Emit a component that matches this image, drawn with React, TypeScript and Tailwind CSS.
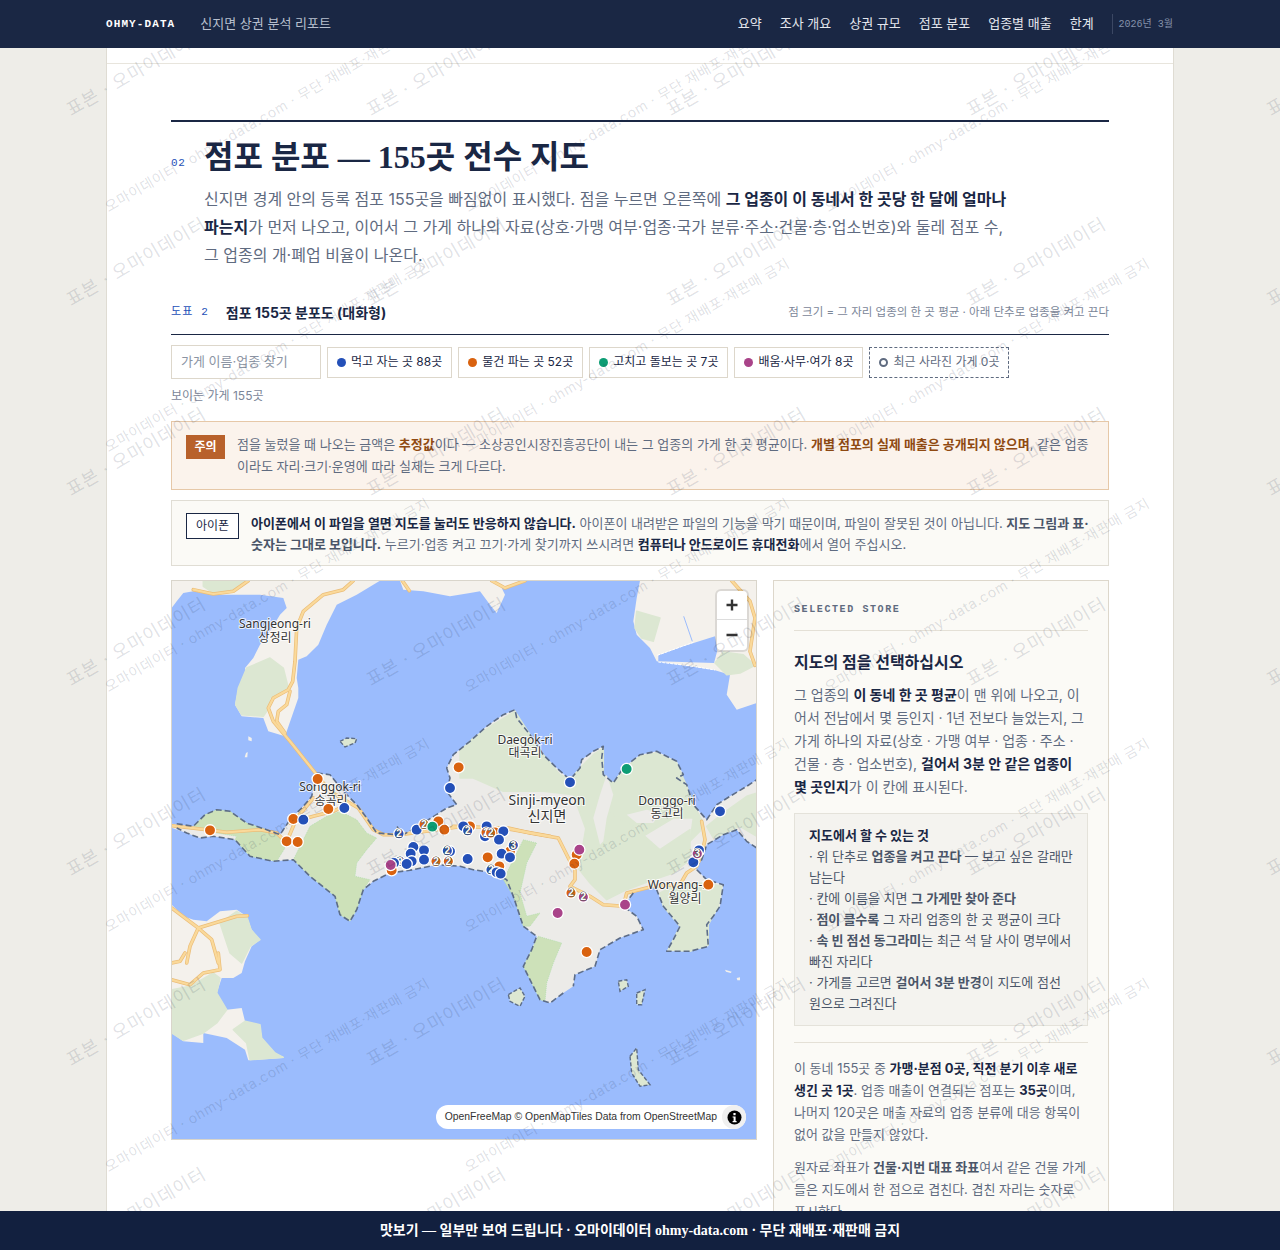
const SANS = "font-['Inter','Noto_Sans_CJK_KR',sans-serif]"
const navy = "#1a2744"

// zoom crops are 3x, so the map was traced in crop coordinates and moved back to page coordinates here
function pts(...segs: [number, number, string][]) {
  return segs
    .map(([ox, oy, s]) =>
      s
        .trim()
        .split(/\s+/)
        .map(p => {
          const [x, y] = p.split(",").map(Number)
          return `${(ox + x / 3).toFixed(1)},${(oy + y / 3).toFixed(1)}`
        })
        .join(" ")
    )
    .join(" ")
}

const Z5: [number, number] = [170, 575]
const Z6: [number, number] = [460, 575]
const Z7: [number, number] = [170, 780]
const Z8: [number, number] = [460, 780]
const Z9: [number, number] = [170, 950]

const mainLand = pts(
  [...Z7, "5,122 70,130 105,95 140,80 180,85 230,120 290,140 330,155 360,110 400,70 425,40"],
  [...Z5, "440,585 480,590 520,640 560,680 590,720 620,765 680,770 680,745 700,770 760,735 830,690 860,680 830,640 840,600 830,570 850,530 900,490"],
  [...Z6, "30,490 80,445 130,410 165,395 170,420 210,470 250,530 290,570 330,605 360,570 365,545 400,520 430,505 425,540 430,590 460,615 490,570 540,530 590,520 650,550 670,590 650,600 680,620 700,680 740,725 770,680 810,655 860,625 890,605"],
  [...Z8, "890,195 860,175 830,140 790,155 740,185 725,230 705,255 740,290 790,305 780,370 760,400 740,425 745,490 690,505 620,505 640,470 660,430 610,370 590,320 590,310 520,330 490,370 530,400 550,440 480,465 420,500 405,550 345,575 340,610 310,630 270,660 240,650 190,550 215,500 230,460 190,430 160,340 140,290 100,270 40,260 0,250"],
  [...Z7, "800,245 730,260 660,270 610,295 580,320 560,380 540,415 510,395 495,340 420,280 370,230 310,235 240,220 195,170 130,160 90,165 50,150 5,135"]
)

const coast = pts(
  [...Z7, "20,122 70,130 105,95 140,80 180,85 230,120 290,140 330,155 360,110 400,70 425,40"],
  [...Z5, "440,585 480,590 520,640 560,680 590,720 620,765 680,770 680,745 700,770 760,735 830,690 860,680 830,640 840,600 830,570 850,530 900,490"],
  [...Z6, "30,490 80,445 130,410 165,395 170,420 210,470 250,530 290,570 330,605 360,570 365,545 400,520 430,505 425,540 430,590 460,615 490,570 540,530 590,520 650,550 670,590 650,600 680,620 700,680 740,725 770,680 810,655 860,625 890,605"]
)
const coastSouth = pts(
  [...Z8, "890,195 860,175 830,140 790,155 740,185 725,230 705,255 740,290 790,305 780,370 760,400 740,425 745,490 690,505 620,505 640,470 660,430 610,370 590,320"],
)
const coastSouth2 = pts(
  [...Z8, "520,330 490,370 530,400 550,440 480,465 420,500 405,550 345,575 340,610"],
)
const coastSouth3 = pts(
  [...Z8, "310,630 270,660 240,650 190,550 215,500 230,460 190,430 160,340 140,290 100,270 40,260 0,250"],
  [...Z7, "800,245 730,260 660,270 610,295 580,320 560,380 540,415 510,395 495,340 420,280 370,230 310,235 240,220 195,170 130,160 90,165 50,150 20,135"]
)

const lands = [
  pts([...Z5, "5,8 5,90 20,70 40,45 70,40 130,50 200,50 270,50 340,60 350,90 330,110 300,160 270,200 250,240 225,270 230,300 205,330 195,380 215,415 280,420 295,460 330,470 345,475 385,360 385,330 380,300 385,245 410,235 445,200 470,140 500,80 560,50 630,8"]),
  pts([...Z5, "690,8 700,35 760,40 840,55 900,45"], [...Z6, "60,40 90,80 110,105 135,50 125,30 200,8"]),
  pts([...Z6, "540,8 530,60 520,130 530,170 570,210 590,250 760,275 810,290 800,350 830,395 890,375 890,8"]),
  pts([...Z7, "5,365 40,400 70,410 110,415 150,385 200,380 230,400 245,440 270,470 245,490 225,535"], [...Z9, "215,60 190,75 155,75 140,120 170,170 215,165 225,205 270,215 275,255 315,300 340,315 235,322 225,290 170,255 100,240 100,270 40,265 5,240"]),
  pts([...Z5, "235,475 245,480 245,490 235,487"]),
  pts([...Z5, "228,525 233,522 232,538 224,538"]),
  pts([...Z8, "795,560 815,566 812,570 798,566"]),
  pts([...Z8, "830,585 840,583 840,592 832,592"]),
]

const islands = [
  pts([...Z5, "510,490 530,480 560,482 555,495 525,507"]),
  pts([...Z8, "145,635 180,615 195,640 180,670 150,655"]),
  pts([...Z8, "475,595 500,590 505,610 480,625"]),
  pts([...Z8, "530,630 555,620 545,665 530,665"]),
  pts([...Z8, "510,820 530,795 535,860 570,905 540,910 515,870"]),
]

const paleGreen = [
  pts([...Z6, "0,520 40,480 100,440 165,400 210,470 250,530 300,590 330,605 360,570 400,530 430,510 430,590 460,615 490,575 540,535 590,525 650,555 680,625 700,680 725,725 720,760 690,790 700,720 640,720 540,780 420,800 380,760 340,650 250,640 130,640 40,600 0,600"]),
  pts([...Z8, "380,120 450,90 520,130 600,200 690,140 690,230 640,270 580,290 500,320 440,350 390,300 350,250 370,180"]),
  pts([...Z8, "740,130 790,90 860,40 890,30 890,160 840,130 760,165"]),
  pts([...Z8, "600,330 660,300 740,300 785,310 775,370 745,425 745,485 690,505 625,500 660,430 610,370"]),
  pts([...Z6, "530,100 600,120 580,190 545,180 525,150"]),
  pts([...Z6, "765,255 790,222 850,230 885,262 840,285 800,290"]),
  pts([...Z5, "230,270 300,240 340,270 355,330 300,360 290,400 280,415 215,410 197,380 205,330"]),
  pts([...Z5, "100,8 230,8 195,32 130,45 100,25"]),
  pts([...Z9, "5,110 60,100 130,60 150,75 140,120 170,170 140,210 100,240 40,262 5,240"]),
  pts([...Z7, "150,420 200,385 232,405 243,440 270,470 240,490 215,540 180,510"]),
  pts([...Z9, "225,205 270,215 275,255 315,300 340,313 240,320 230,270 190,230"]),
]

const parks = [
  pts([...Z7, "370,230 420,130 470,100 510,85 560,110 590,150 620,165 590,200 560,240 555,280 600,290 580,320 560,380 540,415 510,395 495,340 420,280"]),
  pts([...Z8, "190,170 230,180 200,240 180,330 200,400 240,390 210,430 190,430 160,340 130,290"]),
  pts([...Z8, "235,460 305,480 280,540 260,600 255,655 240,650 190,550 215,500"]),
  pts([...Z7, "70,130 105,95 140,80 180,85 230,120 290,140 330,155 345,195 320,235 240,220 195,170 200,160 140,150"]),
]

const towns = [
  pts([...Z7, "255,185 285,180 290,205 265,215"]),
  pts([...Z6, "440,590 460,650 440,720 430,790 420,800 400,720 420,650"]),
  pts([...Z8, "500,95 560,80 600,90 580,120 530,120"]),
]

const roads = [
  pts([...Z7, "5,128 110,140 170,148 270,140 320,150 345,175"]),
  pts([...Z5, "440,590 480,640 565,690 610,755 640,770 690,770 880,745"]),
  pts([...Z7, "850,130 1000,135 1140,160"]),
  pts([...Z5, "430,660 380,720 355,780"]),
  pts([...Z5, "360,735 430,715 490,700 530,680"]),
  pts([...Z8, "145,135 210,150 295,165 330,235 345,250 345,290 330,310 390,340 430,365 490,370 500,330 580,310 660,305 680,270 710,250 725,215 735,170 725,115"]),
  pts([...Z5, "70,35 130,48 190,40 235,8"]),
  pts([...Z5, "550,8 520,35 460,50 400,100 380,150 375,250 368,310 355,335 310,360 295,390 310,430 360,490 440,590"]),
  pts([...Z5, "360,340 350,380 325,400 320,430 345,465"]),
  pts([...Z5, "697,8 718,38"]),
  pts([...Z6, "95,8 135,30 195,8"]),
  pts([...Z6, "815,8 870,70 885,120 870,220 885,262"]),
  pts([...Z7, "5,375 85,435 200,400 232,398"]),
  pts([...Z7, "85,435 60,490 50,540"]),
  pts([...Z7, "85,435 125,470 145,540"]),
  pts([...Z9, "145,0 150,50 100,60 60,95 5,80"]),
  pts([...Z9, "5,30 30,25 45,0"]),
]

type Pin = [number, number, string, string?]
const B = "#2450b8"
const O = "#d9620f"
const G = "#0d9d74"
const P = "#a94389"

function toPage(o: [number, number], list: [number, number, string, string?][]): Pin[] {
  return list.map(([x, y, c, n]) => [o[0] + x / 3, o[1] + y / 3, c, n])
}

const pins: Pin[] = [
  ...toPage(Z5, [
    [443, 603, O], [120, 757, O], [350, 790, O], [383, 792, O], [370, 723, O], [475, 693, O], [866, 568, O],
    [400, 725, B], [523, 690, B], [840, 630, B],
  ]),
  ...toPage(Z7, [
    [687, 152, B, "2"], [740, 140, B], [805, 115, O], [823, 140, O], [762, 124, O, "2"], [787, 131, G],
    [900, 130, O], [880, 130, B], [893, 143, B, "2"],
    [950, 130, B], [945, 160, B], [975, 148, O], [948, 148, O, "2"], [962, 150, O, "2"], [1000, 145, B], [987, 170, B],
    [1020, 205, O], [1030, 187, B, "3"], [995, 212, B], [1020, 223, B],
    [730, 192, B], [722, 212, B], [762, 202, B], [840, 205, B], [832, 203, B, "2"],
    [725, 235, B], [690, 235, B, "2"], [672, 240, B], [665, 262, O], [662, 246, P], [710, 243, B], [762, 230, B],
    [798, 235, O, "2"], [835, 235, O, "2"], [893, 228, B], [953, 223, O], [988, 250, O], [963, 260, B, "2"], [980, 268, B], [992, 272, B],
  ]),
  ...toPage(Z8, [
    [780, 85, B], [350, 215, O], [358, 200, P], [343, 242, O], [333, 330, O, "2"], [370, 342, P, "2"], [495, 365, P], [293, 390, P],
    [380, 507, O], [745, 305, O], [700, 238, B], [717, 202, B], [712, 212, P, "3"],
  ]),
  ...toPage(Z6, [[330, 613, B], [500, 573, G]]),
]

const labels: [number, number, string, number][] = [
  [275, 625, "Sangjeong-ri", 12],
  [275, 639, "상정리", 12],
  [330, 788, "Songgok-ri", 12],
  [331, 802, "송곡리", 12],
  [525, 741, "Daegok-ri", 12],
  [525, 754, "대곡리", 12],
  [547, 802, "Sinji-myeon", 14],
  [547, 818, "신지면", 14],
  [667, 802, "Donggo-ri", 12],
  [667, 815, "동고리", 12],
  [679, 886, "Woryang-ri", 12],
  [685, 900, "월양리", 12],
]

function MapDrawing() {
  return (
    <svg viewBox="172 578 584 558" className="block h-full w-full">
      <rect x="172" y="578" width="584" height="558" fill="#9bbcfd" />
      {lands.map((p, i) => (
        <polygon key={i} points={p} fill="#f4f1ec" />
      ))}
      {islands.map((p, i) => (
        <polygon key={i} points={p} fill="#dde7d2" stroke="#5d6d88" strokeWidth="1.4" strokeDasharray="4 2" />
      ))}
      <polygon points={mainLand} fill="#ecebe8" />
      {paleGreen.map((p, i) => (
        <polygon key={i} points={p} fill="#dce7d2" stroke="#dce7d2" strokeWidth="1.5" strokeLinejoin="round" />
      ))}
      {towns.map((p, i) => (
        <polygon key={i} points={p} fill="#ecebe8" />
      ))}
      {parks.map((p, i) => (
        <polygon key={i} points={p} fill="#cde1b9" stroke="#a6dca6" strokeWidth="0.6" strokeDasharray="1 1" />
      ))}
      {/* bay and breakwaters at the top right */}
      <polygon points={pts([...Z6, "595,232 670,205 765,175 772,218 762,255 595,250"])} fill="#9bbcfd" />
      <polyline points={pts([...Z6, "595,252 700,265 765,276"])} fill="none" stroke="#fff" strokeWidth="1" strokeDasharray="3 1" />
      <polyline points={pts([...Z6, "592,232 700,193"])} fill="none" stroke="#fff" strokeWidth="1" strokeDasharray="3 1" />
      <polyline points={pts([...Z6, "671,115 697,190"])} fill="none" stroke="#9bbcfd" strokeWidth="1" />
      {roads.map((p, i) => (
        <polyline key={i} points={p} fill="none" stroke="#ebbd78" strokeWidth="3.6" strokeLinejoin="round" strokeLinecap="round" />
      ))}
      {roads.map((p, i) => (
        <polyline key={i} points={p} fill="none" stroke="#fad99a" strokeWidth="2.2" strokeLinejoin="round" strokeLinecap="round" />
      ))}
      {[coast, coastSouth, coastSouth2, coastSouth3].map((p, i) => (
        <polyline key={i} points={p} fill="none" stroke="#5d6d88" strokeWidth="1.6" strokeDasharray="6 3" strokeLinejoin="round" />
      ))}
      {labels.map(([x, y, t, s]) => (
        <text
          key={t}
          x={x}
          y={y}
          textAnchor="middle"
          fontSize={s}
          fill="#333"
          stroke="#fff"
          strokeOpacity={0.8}
          strokeWidth={2}
          paintOrder="stroke"
          fontFamily="'Noto Sans', 'Noto Sans CJK KR', sans-serif"
        >
          {t}
        </text>
      ))}
      {pins.map(([x, y, c, n], i) => (
        <g key={i}>
          <circle cx={x} cy={y} r={n ? 5.2 : 5.6} fill={c} stroke="#fff" strokeWidth="1.3" />
          {n ? (
            <text
              x={x}
              y={y + 3.4}
              textAnchor="middle"
              fontSize="10"
              fontWeight="700"
              fill="#fff"
              stroke="#555"
              strokeWidth="1.2"
              paintOrder="stroke"
              fontFamily="'Liberation Sans', sans-serif"
            >
              {n}
            </text>
          ) : null}
        </g>
      ))}
    </svg>
  )
}

function MapBox() {
  return (
    <div className="relative h-[560px] w-[586px] shrink-0 border border-[#d9d5cb] bg-[#9bbcfd]">
      <MapDrawing />
      <div className="absolute right-[9px] top-[10px] flex w-[30px] flex-col overflow-hidden rounded bg-white shadow-[0_0_0_2px_rgba(0,0,0,0.1)]">
        <div className="flex h-[29px] items-center justify-center border-b border-[#ddd]">
          <svg width="14" height="14" viewBox="0 0 14 14">
            <path d="M7 1.5v11M1.5 7h11" stroke="#333" strokeWidth="2.4" />
          </svg>
        </div>
        <div className="flex h-[30px] items-center justify-center">
          <svg width="14" height="14" viewBox="0 0 14 14">
            <path d="M1.5 7h11" stroke="#333" strokeWidth="2.4" />
          </svg>
        </div>
      </div>
      <div className="absolute bottom-[10px] right-[10px] flex h-6 items-center rounded-xl bg-white pl-[9px] font-['Liberation_Sans',sans-serif] text-[10.4px] text-[#333]">
        <span>OpenFreeMap © OpenMapTiles Data from OpenStreetMap</span>
        <span className="ml-[5px] flex h-6 w-6 items-center justify-center rounded-full bg-[#f0f0f0]">
          <svg width="15" height="15" viewBox="0 0 15 15">
            <circle cx="7.5" cy="7.5" r="7" fill="#000" />
            <rect x="6.4" y="3" width="2.2" height="2.2" fill="#fff" />
            <path d="M5.6 6.4h3v4.6h1v1.2h-4v-1.2h1v-3.4h-1z" fill="#fff" />
          </svg>
        </span>
      </div>
    </div>
  )
}

function B2({ children }: { children: React.ReactNode }) {
  return <strong className="font-bold text-[#1a2744]">{children}</strong>
}

const chips = [
  { dot: "bg-[#2450b8]", label: "먹고 자는 곳 88곳" },
  { dot: "bg-[#d9620f]", label: "물건 파는 곳 52곳" },
  { dot: "bg-[#0d9d74]", label: "고치고 돌보는 곳 7곳" },
  { dot: "bg-[#a94389]", label: "배움·사무·여가 8곳" },
]

function SidePanel() {
  return (
    <aside className="h-[700px] flex-1 border border-[#ddd7cb] bg-[#fbfaf6] px-5 pt-[22px]">
      <div className="border-b border-[#e4e0d6] pb-[13px] font-['Liberation_Mono',monospace] text-[10px] font-bold leading-[14px] tracking-[0.16em] text-[#5f6b80]">
        SELECTED STORE
      </div>
      <h3 className="mt-[19px] text-[16px] font-bold leading-[24px] text-[#1a2744]">지도의 점을 선택하십시오</h3>
      <p className="mt-[9px] text-[14px] leading-[23px] text-[#5f6b80]">
        그 업종의 <B2>이 동네 한 곳 평균</B2>이 맨 위에 나오고, 이어서 전남에서 몇 등인지 · 1년 전보다 늘었는지, 그 가게 하나의 자료(상호 · 가맹 여부 · 업종 · 주소 · 건물 · 층 · 업소번호), <B2>걸어서 3분 안 같은 업종이 몇 곳인지</B2>가 이 칸에 표시된다.
      </p>
      <div className="mt-[15px] border border-[#e4e2da] bg-[#f4f3ef] px-[14px] py-[11px] text-[13px] leading-[21px] text-[#4a5568]">
        <div className="font-bold text-[#1a2744]">지도에서 할 수 있는 것</div>
        <div>· 위 단추로 <b>업종을 켜고 끈다</b> — 보고 싶은 갈래만 남는다</div>
        <div>· 칸에 이름을 치면 <b>그 가게만 찾아 준다</b></div>
        <div>· <b>점이 클수록</b> 그 자리 업종의 한 곳 평균이 크다</div>
        <div>· <b>속 빈 점선 동그라미</b>는 최근 석 달 사이 명부에서 빠진 자리다</div>
        <div>· 가게를 고르면 <b>걸어서 3분 반경</b>이 지도에 점선 원으로 그려진다</div>
      </div>
      <div className="mt-4 border-t border-[#e4e0d6] pt-[14px] text-[13px] leading-[22px] text-[#5f6b80]">
        <p>
          이 동네 155곳 중 <B2>가맹·분점 0곳, 직전 분기 이후 새로 생긴 곳 1곳</B2>. 업종 매출이 연결되는 점포는 <B2>35곳</B2>이며, 나머지 120곳은 매출 자료의 업종 분류에 대응 항목이 없어 값을 만들지 않았다.
        </p>
        <p className="mt-[11px]">
          원자료 좌표가 <b className="text-[#4a5568]">건물·지번 대표 좌표</b>여서 같은 건물 가게들은 지도에서 한 점으로 겹친다. 겹친 자리는 숫자로 표시한다.
        </p>
      </div>
    </aside>
  )
}

const layerOne = [120, 310, 500, 690, 880, 1070, 1260].flatMap(y =>
  [73, 373, 673, 973, 1273].map(x => ({ x, y }))
)
const layerTwo = [-25, 215, 455, 695, 935, 1175].flatMap(y =>
  [110, 470, 830].map(x => ({ x, y }))
)

function Watermarks() {
  return (
    <div className={`pointer-events-none absolute inset-0 overflow-hidden text-[#1a2744]/15 ${SANS}`}>
      {layerOne.map(({ x, y }) => (
        <span
          key={`a${x}-${y}`}
          className="absolute origin-bottom-left -rotate-[30deg] whitespace-nowrap text-[18px] leading-[20px] tracking-[0.05em]"
          style={{ left: x, top: y - 20 }}
        >
          표본 · 오마이데이터
        </span>
      ))}
      {layerTwo.map(({ x, y }) => (
        <span
          key={`b${x}-${y}`}
          className="absolute origin-bottom-left -rotate-[30deg] whitespace-nowrap text-[14px] leading-[16px] tracking-[0.05em]"
          style={{ left: x, top: y - 16 }}
        >
          오마이데이터 · ohmy-data.com · 무단 재배포·재판매 금지
        </span>
      ))}
    </div>
  )
}

export default function App() {
  return (
    <div className={`relative flex h-[1250px] flex-col overflow-hidden bg-[#eeede8] ${SANS}`}>
      <header className="relative z-10 flex h-12 shrink-0 items-center bg-[#1a2744] pl-[106px] pr-[107px]">
        <span className="font-['Liberation_Mono',monospace] text-[11px] font-bold tracking-[0.1em] text-white">OHMY-DATA</span>
        <span className="ml-[25px] text-[13px] text-[#b8c0cf]">신지면 상권 분석 리포트</span>
        <nav className="ml-auto flex items-center gap-[18px] text-[13px] text-[#e5e8ee]">
          <span>요약</span>
          <span>조사 개요</span>
          <span>상권 규모</span>
          <span>점포 분포</span>
          <span>업종별 매출</span>
          <span>한계</span>
        </nav>
        <span className="ml-[18px] flex h-5 items-center border-l border-[#3b4763] pl-[6px] font-['Liberation_Mono','Noto_Sans_CJK_KR',monospace] text-[10px] text-[#8592aa]">
          2026년 3월
        </span>
      </header>

      <main className="mx-auto min-h-0 w-[1066px] flex-1 overflow-hidden bg-white shadow-[0_0_0_1px_#dfdcd3]">
        <div className="h-4 border-b border-[#e8e5dd]" />
        <div className="px-16 pt-14">
          <div className="border-t-2 border-[#1a2744]">
            <div className="flex items-end pt-4">
              <span className="w-[33px] pb-[5px] font-['Liberation_Mono',monospace] text-[11px] tracking-[0.05em] text-[#2450b8]">02</span>
              <h2 className="font-['Liberation_Serif','Noto_Sans_CJK_KR',serif] text-[32px] font-bold leading-[38px] text-[#1a2744]">
                점포 분포 — 155곳 전수 지도
              </h2>
            </div>
            <p className="ml-[33px] mt-[9px] w-[805px] text-[16px] leading-[28px] text-[#5f6b80]">
              신지면 경계 안의 등록 점포 155곳을 빠짐없이 표시했다. 점을 누르면 오른쪽에 <B2>그 업종이 이 동네서 한 곳당 한 달에 얼마나 파는지</B2>가 먼저 나오고, 이어서 그 가게 하나의 자료(상호·가맹 여부·업종·국가 분류·주소·건물·층·업소번호)와 둘레 점포 수, 그 업종의 개·폐업 비율이 나온다.
            </p>
          </div>

          <div className="mt-[33px] flex items-center border-b border-[#1a2744] pb-[11px]">
            <span className="font-['Liberation_Mono','Noto_Sans_CJK_KR',monospace] text-[11px] tracking-[0.1em] text-[#2450b8]">도표 2</span>
            <span className="ml-[17px] text-[14px] font-bold text-[#1a2744]">점포 155곳 분포도 (대화형)</span>
            <span className="ml-auto text-[11.5px] text-[#7b8698]">점 크기 = 그 자리 업종의 한 곳 평균 · 아래 단추로 업종을 켜고 끈다</span>
          </div>

          <div className="mt-[10px] flex items-center gap-[6px]">
            <div className="flex h-[34px] w-[150px] items-center border border-[#ddd7cb] px-[9px] text-[13px] text-[#8b94a3]">가게 이름·업종 찾기</div>
            {chips.map(c => (
              <div key={c.label} className="flex h-[31px] items-center gap-[5px] border border-[#ddd7cb] px-[9px] text-[12px] text-[#1a2744]">
                <span className={`h-[9px] w-[9px] rounded-full ${c.dot}`} />
                {c.label}
              </div>
            ))}
            <div className="flex h-[31px] items-center gap-[5px] border border-dashed border-[#5f6b80] px-[9px] text-[12px] text-[#5f6b80]">
              <span className="h-[9px] w-[9px] rounded-full border-2 border-[#5f6b80]" />
              최근 사라진 가게 0곳
            </div>
          </div>
          <div className="mt-[8px] text-[12px] leading-[18px] text-[#7b8698]">보이는 가게 155곳</div>

          <div className="mt-4 flex h-[69px] gap-3 border border-[#e6c8a8] bg-[#fbf3ec] pl-[14px] pr-4 pt-[11px]">
            <span className="mt-[2px] flex h-6 w-[39px] shrink-0 items-center justify-center bg-[#b8612b] text-[12px] font-bold text-white">주의</span>
            <p className="text-[13px] leading-[22px] text-[#5f6b80]">
              점을 눌렀을 때 나오는 금액은 <b className="text-[#8f4a12]">추정값</b>이다 — 소상공인시장진흥공단이 내는 그 업종의 가게 한 곳 평균이다. <b className="text-[#8f4a12]">개별 점포의 실제 매출은 공개되지 않으며</b>, 같은 업종이라도 자리·크기·운영에 따라 실제는 크게 다르다.
            </p>
          </div>

          <div className="mt-[10px] flex h-[66px] gap-3 border border-[#e0ddd4] bg-[#fbfaf6] pl-[14px] pr-4 pt-[12px]">
            <span className="flex h-[26px] w-[53px] shrink-0 items-center justify-center border border-[#1a2744] bg-white text-[12px] text-[#1a2744]">아이폰</span>
            <p className="text-[13px] leading-[21px] text-[#5f6b80]">
              <B2>아이폰에서 이 파일을 열면 지도를 눌러도 반응하지 않습니다.</B2> 아이폰이 내려받은 파일의 기능을 막기 때문이며, 파일이 잘못된 것이 아닙니다. <b className="text-[#4a5568]">지도 그림과 표·숫자는 그대로 보입니다.</b> 누르기·업종 켜고 끄기·가게 찾기까지 쓰시려면 <B2>컴퓨터나 안드로이드 휴대전화</B2>에서 열어 주십시오.
            </p>
          </div>

          <div className="mt-[14px] flex items-start gap-4">
            <MapBox />
            <SidePanel />
          </div>
        </div>
      </main>

      <footer className="relative z-10 flex h-[39px] shrink-0 items-center justify-center bg-[#12203f] font-['Liberation_Serif','Noto_Sans_CJK_KR',serif] text-[14px] font-bold text-white">
        맛보기 — 일부만 보여 드립니다 · 오마이데이터 ohmy-data.com · 무단 재배포·재판매 금지
      </footer>

      <Watermarks />
    </div>
  )
}
